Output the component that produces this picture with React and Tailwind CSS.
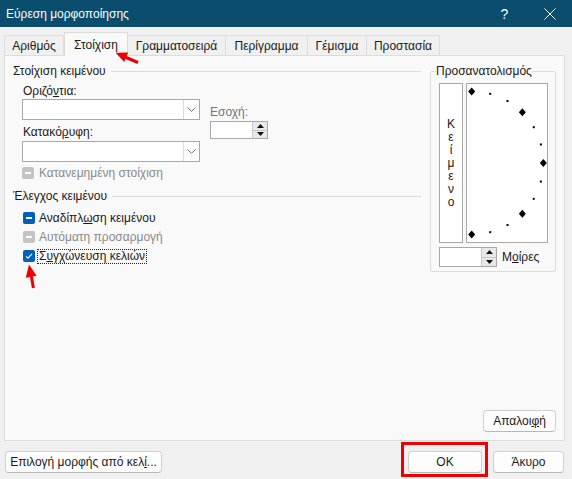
import React from 'react';

// Εύρεση μορφοποίησης - καρτέλα Στοίχιση

const Tab = ({ label, width, active }) => (
    <div
        className={
            active
                ? 'h-[24px] -mb-px bg-[#f9f9f9] border-x border-t border-[#dcdcdc] flex items-center justify-center'
                : 'h-[20px] bg-[#f0f0f0] border-t border-r border-[#dcdcdc] flex items-center justify-center'
        }
        style={{ width }}
    >
        {label}
    </div>
);

const Heading = ({ children, className = '' }) => (
    <div className={`flex items-center h-[16px] ${className}`}>
        <span>{children}</span>
        <div className="flex-1 h-px bg-[#dcdcdc] ml-[5px]" />
    </div>
);

const Combo = ({ className = '' }) => (
    <div className={`h-[21px] w-[178px] bg-white border border-[#a8a8a8] flex ${className}`}>
        <div className="flex-1" />
        <div className="w-[16px] border-l border-[#dadada] flex items-center justify-center">
            <svg width="9" height="5" viewBox="0 0 9 5">
                <path d="M0.5 0.5 L4.5 4.3 L8.5 0.5" fill="none" stroke="#6b6b6b" strokeWidth="1" />
            </svg>
        </div>
    </div>
);

const Spin = ({ className = '' }) => (
    <div className={`bg-white border border-[#a8a8a8] flex ${className}`}>
        <div className="flex-1" />
        <div className="w-[15px] border-l border-[#c8c8c8] bg-[#e8e8e8] flex flex-col">
            <div className="flex-1 flex items-center justify-center border-b border-[#c8c8c8]">
                <svg width="7" height="4" viewBox="0 0 7 4">
                    <path d="M0 4 L3.5 0 L7 4 Z" fill="#111" />
                </svg>
            </div>
            <div className="flex-1 flex items-center justify-center">
                <svg width="7" height="4" viewBox="0 0 7 4">
                    <path d="M0 0 L3.5 4 L7 0 Z" fill="#111" />
                </svg>
            </div>
        </div>
    </div>
);

const Box = ({ state }) => {
    if (state === 'check') {
        return (
            <div className="w-[12px] h-[12px] rounded-[2px] bg-[#005fb8] flex items-center justify-center">
                <svg width="12" height="12" viewBox="0 0 12 12">
                    <path d="M3 6.3 L5 8.2 L9 3.8" fill="none" stroke="#fff" strokeWidth="1.1" />
                </svg>
            </div>
        );
    }
    return (
        <div
            className={`w-[12px] h-[12px] rounded-[2px] flex items-center justify-center ${
                state === 'disabled' ? 'bg-[#c4c4c4]' : 'bg-[#005fb8]'
            }`}
        >
            <div className="w-[6px] h-[1.5px] bg-white" />
        </div>
    );
};

const Button = ({ children, className = '' }) => (
    <div
        className={`h-[22px] bg-[#fdfdfd] border border-[#d0d0d0] border-b-[#b8b8b8] rounded-[4px] flex items-center justify-center ${className}`}
    >
        {children}
    </div>
);

// σημεία του τόξου προσανατολισμού
const arcPoints = [];
for (let a = -90; a <= 90; a += 15) {
    const r = (a * Math.PI) / 180;
    arcPoints.push({ x: 4.7 + 71.6 * Math.cos(r), y: 79 + 71.6 * Math.sin(r), big: a % 45 === 0 });
}

const App = () => {
    return (
        <div className="relative w-[572px] h-[479px] bg-[#f0f0f0] text-[12px] leading-[16px] text-[#1a1a1a] font-['Liberation_Sans',sans-serif] overflow-hidden">
            {/* Γραμμή τίτλου */}
            <div className="h-[27px] bg-[#0b4d6d] flex items-center text-white">
                <div className="flex-1 pl-[6px]">Εύρεση μορφοποίησης</div>
                <div className="w-[45px] h-full flex items-center justify-center text-[14px] font-light">?</div>
                <div className="w-[45px] h-full flex items-center justify-center">
                    <svg width="12" height="12" viewBox="0 0 12 12">
                        <path d="M0.5 0.5 L11.5 11.5 M11.5 0.5 L0.5 11.5" stroke="#fff" strokeWidth="1" />
                    </svg>
                </div>
            </div>

            {/* Καρτέλες */}
            <div className="relative z-10 mt-[5px] pl-[4px] h-[23px] flex items-end">
                <div className="h-[20px] border-l border-[#dcdcdc]" />
                <Tab label="Αριθμός" width={59} />
                <Tab label="Στοίχιση" width={64} active />
                <Tab label="Γραμματοσειρά" width={98} />
                <Tab label="Περίγραμμα" width={82} />
                <Tab label="Γέμισμα" width={59} />
                <Tab label="Προστασία" width={73} />
            </div>

            {/* Περιεχόμενο καρτέλας */}
            <div className="ml-[4px] w-[561px] h-[386px] border border-[#dcdcdc] bg-[#f9f9f9] flex flex-col">
                <div className="flex pt-[7px] pl-[8px]">
                    <div className="w-[408px]">
                        <Heading>Στοίχιση κειμένου</Heading>
                        <div className="flex mt-[4px] pl-[9px]">
                            <div className="w-[178px]">
                                <div className="h-[16px] pl-px">
                                    Οριζό<span className="underline">ν</span>τια:
                                </div>
                                <Combo />
                                <div className="mt-[4px] h-[16px] pl-px">
                                    Κατακό<span className="underline">ρ</span>υφη:
                                </div>
                                <Combo className="mt-[1px]" />
                                <div className="mt-[3px] h-[16px] flex items-center">
                                    <Box state="disabled" />
                                    <span className="ml-[5px] text-[#8a8a8a]">Κατανεμημένη στοίχιση</span>
                                </div>
                            </div>
                            <div className="ml-[10px] pt-[21px]">
                                <div className="h-[16px] text-[#6f7680]">Εσοχή:</div>
                                <Spin className="mt-[1px] w-[58px] h-[18px]" />
                            </div>
                        </div>

                        <Heading className="mt-[7px]">Έλεγχος κειμένου</Heading>
                        <div className="mt-[6px] pl-[10px] flex flex-col gap-[3px]">
                            <div className="h-[16px] flex items-center">
                                <Box state="dash" />
                                <span className="ml-[4px]">
                                    Αναδίπλ<span className="underline">ω</span>ση κειμένου
                                </span>
                            </div>
                            <div className="h-[16px] flex items-center">
                                <Box state="disabled" />
                                <span className="ml-[4px] text-[#8a8a8a]">Αυτόματη προσαρμογή</span>
                            </div>
                            <div className="h-[16px] flex items-center">
                                <Box state="check" />
                                <span className="ml-[2px] border border-dotted border-[#222] px-px leading-[13px]">
                                    Σ<span className="underline">υ</span>γχώνευση κελιών
                                </span>
                            </div>
                        </div>
                    </div>

                    {/* Προσανατολισμός */}
                    <fieldset className="ml-[9px] w-[126px] border border-[#dcdcdc] rounded-[2px] pl-[8px] pb-[4px]">
                        <legend className="-ml-[3px] px-0">Προσανατολισμός</legend>
                        <div className="mt-[4px] flex">
                            <div className="w-[24px] h-[160px] bg-white border border-[#a8a8a8] flex flex-col items-center justify-center leading-[13px]">
                                {['Κ', 'ε', 'ί', 'μ', 'ε', 'ν', 'ο'].map((c, i) => (
                                    <span key={i}>{c}</span>
                                ))}
                            </div>
                            <div className="ml-[3px] w-[82px] h-[160px] bg-white border border-[#a8a8a8]">
                                <svg width="80" height="158" viewBox="0 0 80 158">
                                    {arcPoints.map((p, i) =>
                                        p.big ? (
                                            <path
                                                key={i}
                                                d={`M${p.x} ${p.y - 4} L${p.x + 3.5} ${p.y} L${p.x} ${p.y + 4} L${p.x - 3.5} ${p.y} Z`}
                                                fill="#000"
                                            />
                                        ) : (
                                            <rect key={i} x={p.x - 1} y={p.y - 1} width="2" height="2" fill="#000" />
                                        )
                                    )}
                                </svg>
                            </div>
                        </div>
                        <div className="mt-[4px] flex items-center">
                            <Spin className="w-[58px] h-[20px]" />
                            <span className="ml-[5px]">
                                Μ<span className="underline">ο</span>ίρες
                            </span>
                        </div>
                    </fieldset>
                </div>

                <div className="flex-1" />
                <div className="flex justify-end pr-[8px] pb-[8px]">
                    <Button className="w-[73px] h-[21px]">
                        Απαλοι<span className="underline">φ</span>ή
                    </Button>
                </div>
            </div>

            {/* Κουμπιά κάτω */}
            <div className="mt-[10px] flex items-center">
                <Button className="ml-[5px] w-[157px]">
                    Επιλογή μορφής από κελ<span className="underline">ί</span>...
                </Button>
                <div className="flex-1" />
                <Button className="w-[74px] border-[#0067c0] border-b-[#0067c0]">OK</Button>
                <Button className="ml-[11px] mr-[8px] w-[71px]">Άκυρο</Button>
            </div>

            {/* Κόκκινες σημειώσεις */}
            <svg className="absolute inset-0 z-20 pointer-events-none" width="572" height="479" viewBox="0 0 572 479">
                <path d="M138 62.5 L125 57" stroke="#ee0000" strokeWidth="3" />
                <path d="M115.5 52.8 L128.2 52.6 L124.2 61.9 Z" fill="#ee0000" />
                <path d="M33.4 288 L31.3 276" stroke="#ee0000" strokeWidth="3" />
                <path d="M29 264.5 L36.6 275.8 L25.8 277.8 Z" fill="#ee0000" />
                <rect x="402.5" y="443.5" width="84" height="32" fill="none" stroke="#ee0000" strokeWidth="3" />
            </svg>
        </div>
    );
};

export default App;
